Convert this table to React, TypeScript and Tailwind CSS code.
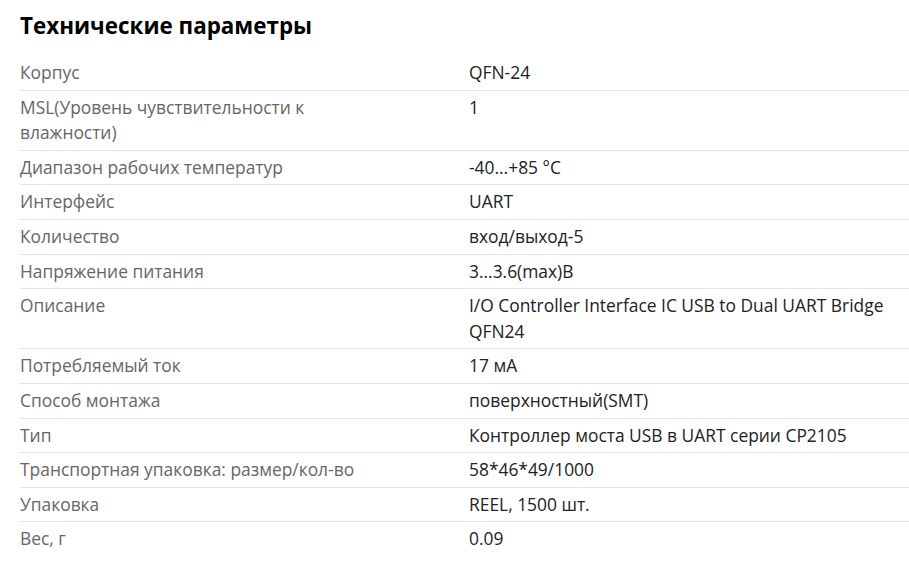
const specs: [string, string][] = [
  ["Корпус", "QFN-24"],
  ["MSL(Уровень чувствительности к влажности)", "1"],
  ["Диапазон рабочих температур", "-40...+85 °C"],
  ["Интерфейс", "UART"],
  ["Количество", "вход/выход-5"],
  ["Напряжение питания", "3...3.6(max)В"],
  ["Описание", "I/O Controller Interface IC USB to Dual UART Bridge QFN24"],
  ["Потребляемый ток", "17 мА"],
  ["Способ монтажа", "поверхностный(SMT)"],
  ["Тип", "Контроллер моста USB в UART серии CP2105"],
  ["Транспортная упаковка: размер/кол-во", "58*46*49/1000"],
  ["Упаковка", "REEL, 1500 шт."],
  ["Вес, г", "0.09"],
];

export default function App() {
  return (
    <div className="min-h-screen bg-white pl-[20px] pt-[12px] font-['Open_Sans',sans-serif]">
      <h2 className="mb-[16px] text-[22.4px] font-bold leading-[28px] text-black">
        Технические параметры
      </h2>
      <div>
        {specs.map(([label, value], i) => (
          <div
            key={label}
            className={`grid grid-cols-[449px_1fr] py-[4px] text-[17.4px] leading-[25.6px] ${
              i < specs.length - 1 ? "border-b border-[#e3e3e3]" : ""
            }`}
          >
            <div className="max-w-[340px] text-[#666666]">{label}</div>
            <div className="text-[#222222]">{value}</div>
          </div>
        ))}
      </div>
    </div>
  );
}
